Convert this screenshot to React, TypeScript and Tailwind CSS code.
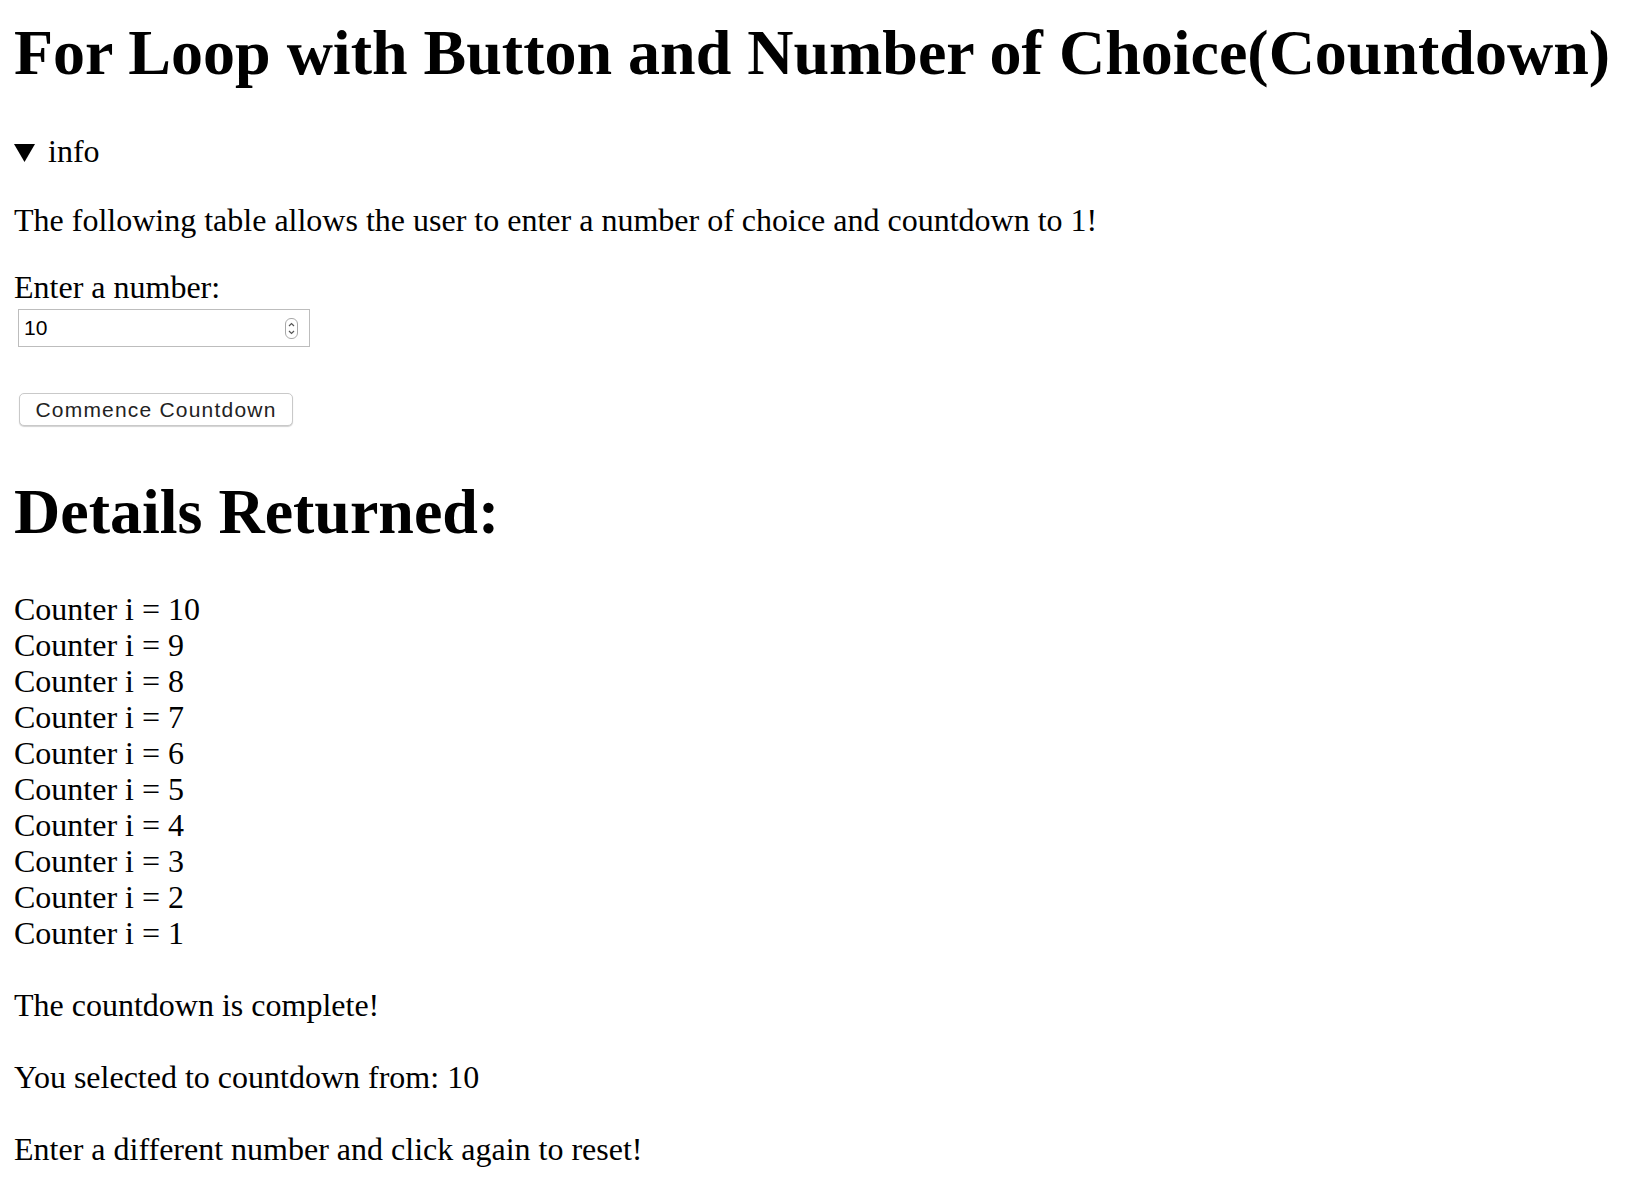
import React from "react";

function Spinner() {
  return (
    <svg width="13" height="21" viewBox="0 0 13 21" fill="none">
      <rect x="0.5" y="0.5" width="12" height="20" rx="5.5" stroke="#a8a8a8" strokeWidth="1" />
      <path d="M4 8 L6.5 5.5 L9 8" stroke="#555" strokeWidth="1.2" fill="none" />
      <path d="M4 13 L6.5 15.5 L9 13" stroke="#555" strokeWidth="1.2" fill="none" />
    </svg>
  );
}

export default function App() {
  const counters = [10, 9, 8, 7, 6, 5, 4, 3, 2, 1];
  return (
    <div className="min-h-screen bg-white text-black font-['Liberation_Serif','Times_New_Roman',serif] pl-[14px]">
      <h1 className="pt-[17px] text-[64px] leading-[72px] font-bold whitespace-nowrap">
        For Loop with Button and Number of Choice(Countdown)
      </h1>

      <div className="mt-[44px] flex items-center text-[32px] leading-[36px]">
        <svg width="21" height="18" viewBox="0 0 21 18" className="mr-[13px] mt-[3px]">
          <polygon points="0,0 21,0 10.5,18" fill="#000" />
        </svg>
        <span>info</span>
      </div>

      <p className="mt-[33px] text-[32px] leading-[36px]">
        The following table allows the user to enter a number of choice and countdown to 1!
      </p>

      <div className="mt-[31px] text-[32px] leading-[36px]">Enter a number:</div>

      <div className="mt-[4px] ml-[4px] flex h-[38px] w-[292px] items-center justify-between border border-[#bdbdbd] bg-white pl-[5px] pr-[11px] font-['Liberation_Sans',Arial,sans-serif] text-[21px] text-black">
        <span>10</span>
        <Spinner />
      </div>

      <div className="mt-[46px] ml-[5px] flex h-[33px] w-[274px] items-center justify-center rounded-[5px] border border-[#c9c9c9] bg-white font-['Liberation_Sans',Arial,sans-serif] text-[21px] tracking-[1.2px] text-[#222] shadow-[0_1px_1px_rgba(0,0,0,0.18)]">
        Commence Countdown
      </div>

      <h2 className="mt-[50px] text-[64px] leading-[72px] font-bold">Details Returned:</h2>

      <div className="mt-[43px] text-[32px] leading-[36px]">
        {counters.map((c) => (
          <div key={c}>Counter i = {c}</div>
        ))}
        <div className="h-[36px]" />
        <div>The countdown is complete!</div>
        <div className="h-[36px]" />
        <div>You selected to countdown from: 10</div>
        <div className="h-[36px]" />
        <div>Enter a different number and click again to reset!</div>
      </div>
    </div>
  );
}
